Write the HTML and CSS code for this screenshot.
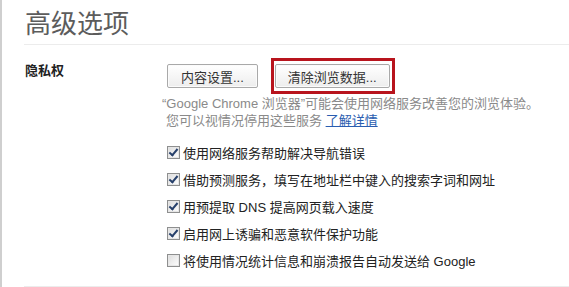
FILE: index.html
```html
<!DOCTYPE html>
<html lang="zh-CN">
<head>
    <meta charset="UTF-8">
    <title>高级选项</title>
    <link rel="stylesheet" href="styles.css">
</head>
<body>

<div class="page">
    <h1 class="title">高级选项</h1>

    <div class="section">
        <h3 class="section-title">隐私权</h3>
        <div class="section-body">
            <div class="buttons">
                <button class="btn">内容设置...</button>
                <span class="highlight">
                    <button class="btn">清除浏览数据...</button>
                </span>
            </div>
            <p class="desc">
                <span class="quote">“</span>Google Chrome 浏览器”可能会使用网络服务改善您的浏览体验。<br>
                您可以视情况停用这些服务 <a href="#">了解详情</a>
            </p>
            <ul class="options">
                <li><label><input type="checkbox" checked> 使用网络服务帮助解决导航错误</label></li>
                <li><label><input type="checkbox" checked> 借助预测服务，填写在地址栏中键入的搜索字词和网址</label></li>
                <li><label><input type="checkbox" checked> 用预提取 DNS 提高网页载入速度</label></li>
                <li><label><input type="checkbox" checked> 启用网上诱骗和恶意软件保护功能</label></li>
                <li><label><input type="checkbox"> 将使用情况统计信息和崩溃报告自动发送给 Google</label></li>
            </ul>
        </div>
    </div>
</div>

</body>
</html>
```

FILE: styles.css
```css
html, body {
    margin: 0;
    padding: 0;
    background-color: #ffffff;
}
body {
    font-family: 'Liberation Sans', 'Noto Sans CJK SC', sans-serif;
    font-size: 13px;
    color: #333333;
    height: 287px;
    overflow: hidden;
}
.page {
    border-left: 2px solid #cfcfcf;
    height: 287px;
    box-sizing: border-box;
    padding-left: 22px;
}
.title {
    margin: 0;
    padding: 9px 0 5px 1px;
    font-size: 26px;
    line-height: 30px;
    font-weight: normal;
    color: #5c5c5c;
    border-bottom: 1px solid #ececec;
}
.section {
    display: flex;
    padding: 13px 0 12px 0;
    border-bottom: 1px solid #ececec;
}
.section-title {
    margin: 4px 0 0 1px;
    width: 142px;
    font-size: 13px;
    line-height: 18px;
    font-weight: bold;
    color: #222222;
}
.section-body {
    flex: 1;
}
.buttons {
    display: flex;
    align-items: center;
    gap: 13px;
}
.btn {
    font-family: inherit;
    font-size: 13px;
    color: #333333;
    height: 24px;
    padding: 0 13px;
    border: 1px solid #a9a9a9;
    border-radius: 2px;
    background: linear-gradient(#ffffff, #ededed);
    box-shadow: inset 0 0 0 1px #fbfbfb;
}
.highlight {
    display: flex;
    padding: 3px 2px 3px 1px;
    border: 3px solid #b8141d;
}
.highlight .btn {
    padding: 0 12px;
}
.desc {
    margin: 1px 0 0 -1px;
    line-height: 17px;
    color: #8a8a8a;
}
.desc .quote {
    margin-left: -4px;
}
.desc a {
    color: #2a5db0;
    text-decoration: underline;
}
.options {
    list-style: none;
    margin: 10px 0 0 0;
    padding: 0;
}
.options li {
    height: 27px;
    display: flex;
    align-items: center;
}
.options label {
    display: flex;
    align-items: center;
    gap: 3px;
    color: #222222;
}
.options input {
    appearance: none;
    -webkit-appearance: none;
    margin: 0;
    width: 13px;
    height: 13px;
    border: 1px solid #8e8f8f;
    box-shadow: inset 0 0 0 1px #e6e6e6;
    background: linear-gradient(135deg, #dcdcdc, #ffffff);
    position: relative;
}
.options input:checked::after {
    content: "";
    position: absolute;
    left: 3px;
    top: 0px;
    width: 3px;
    height: 7px;
    border: solid #27406b;
    border-width: 0 2px 2px 0;
    transform: rotate(40deg);
}
```
